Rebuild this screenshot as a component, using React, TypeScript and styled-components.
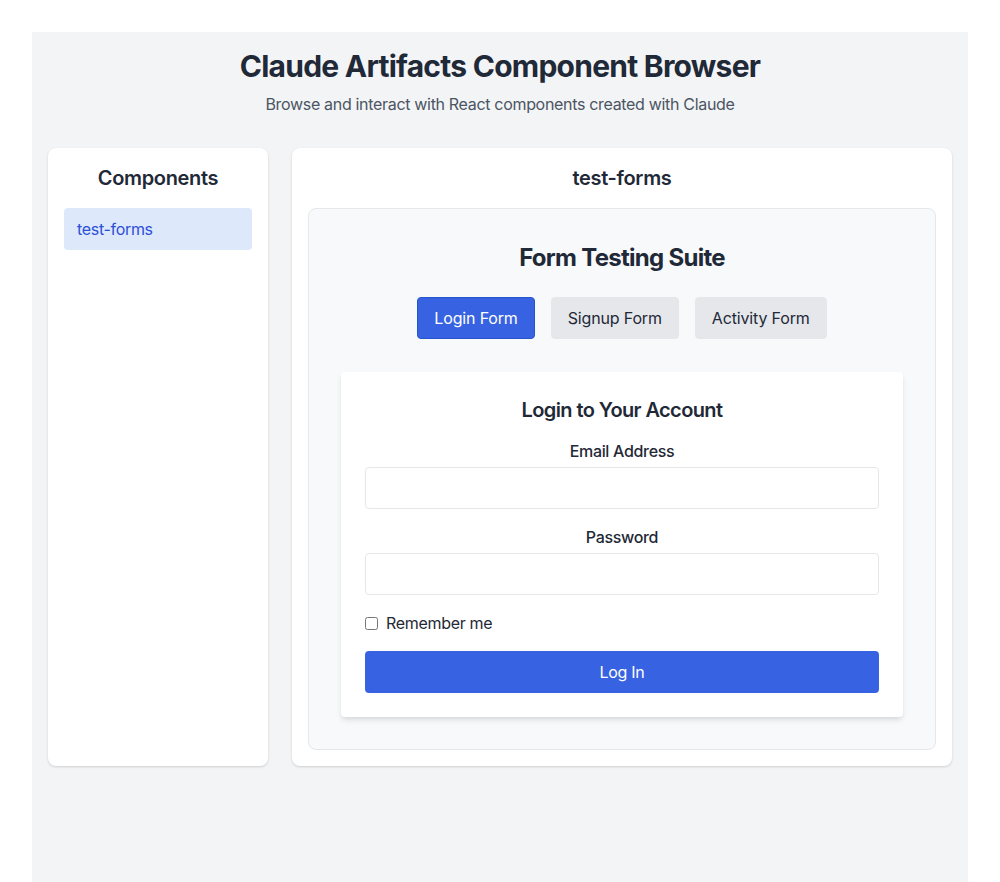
import { useState } from "react";
import styled, { createGlobalStyle } from "styled-components";

const GlobalStyle = createGlobalStyle`
  * {
    box-sizing: border-box;
  }
  body {
    margin: 0;
    font-family: Inter, "Noto Sans", sans-serif;
    letter-spacing: -0.02em;
    background: #ffffff;
    color: #1f2937;
  }
  button, input {
    letter-spacing: inherit;
  }
`;

const Page = styled.div`
  padding: 32px 32px 0 32px;
`;

const Shell = styled.div`
  background: #f3f4f6;
  min-height: 850px;
  padding: 16px 16px 32px 16px;
`;

const Header = styled.header`
  text-align: center;
  margin-bottom: 32px;
`;

const Title = styled.h1`
  margin: 0;
  font-size: 30px;
  line-height: 36px;
  font-weight: 700;
  letter-spacing: -0.025em;
  color: #1f2937;
`;

const Subtitle = styled.p`
  margin: 8px 0 0 0;
  font-size: 16px;
  line-height: 24px;
  color: #4b5563;
`;

const Layout = styled.div`
  display: grid;
  grid-template-columns: 220px 1fr;
  gap: 24px;
  align-items: stretch;
`;

const Card = styled.section`
  background: #ffffff;
  border-radius: 8px;
  box-shadow: 0 1px 3px rgba(0, 0, 0, 0.1), 0 1px 2px rgba(0, 0, 0, 0.06);
  padding: 16px;
`;

const CardTitle = styled.h2`
  margin: 0 0 16px 0;
  text-align: center;
  font-size: 20px;
  line-height: 28px;
  font-weight: 600;
  color: #1f2937;
`;

const NavItem = styled.button<{ $active?: boolean }>`
  display: block;
  width: 100%;
  text-align: left;
  border: none;
  border-radius: 4px;
  padding: 9px 13px;
  font-family: inherit;
  font-size: 16px;
  line-height: 24px;
  cursor: pointer;
  background: ${({ $active }) => ($active ? "#dde8fb" : "transparent")};
  color: ${({ $active }) => ($active ? "#2c4fd8" : "#374151")};
`;

const Stage = styled.div`
  background: #f8f9fb;
  border: 1px solid #e5e7eb;
  border-radius: 8px;
  padding: 33px 32px 32px 32px;
`;

const SuiteTitle = styled.h3`
  margin: 0 0 23px 0;
  text-align: center;
  font-size: 24px;
  line-height: 32px;
  font-weight: 700;
  letter-spacing: -0.03em;
  color: #1f2937;
`;

const Tabs = styled.div`
  display: flex;
  justify-content: center;
  gap: 16px;
  margin-bottom: 33px;
`;

const Tab = styled.button<{ $active?: boolean }>`
  padding: 8px 16px;
  border-radius: 4px;
  font-family: inherit;
  font-size: 16px;
  line-height: 24px;
  letter-spacing: -0.01em;
  cursor: pointer;
  border: 1px solid ${({ $active }) => ($active ? "#2554cc" : "#e5e7eb")};
  background: ${({ $active }) => ($active ? "#3763e2" : "#e5e7eb")};
  color: ${({ $active }) => ($active ? "#ffffff" : "#1f2937")};
`;

const FormCard = styled.form`
  background: #ffffff;
  border-radius: 4px;
  box-shadow: 0 4px 6px -1px rgba(0, 0, 0, 0.1), 0 2px 4px -1px rgba(0, 0, 0, 0.06);
  padding: 24px;
  max-width: 562px;
  margin: 0 auto;
`;

const FormTitle = styled.h4`
  margin: 0 0 15px 0;
  text-align: center;
  font-size: 20px;
  line-height: 28px;
  font-weight: 600;
  letter-spacing: -0.03em;
  color: #1f2937;
`;

const Field = styled.div`
  margin-bottom: 16px;
`;

const Label = styled.label`
  display: block;
  text-align: center;
  font-size: 16px;
  line-height: 24px;
  font-weight: 500;
  color: #1f2937;
  margin-bottom: 4px;
`;

const TextInput = styled.input`
  display: block;
  width: 100%;
  height: 42px;
  border: 1px solid #e5e7eb;
  border-radius: 4px;
  padding: 8px 12px;
  font-family: inherit;
  font-size: 16px;
  outline: none;
  background: #ffffff;
`;

const CheckRow = styled.label`
  display: flex;
  align-items: center;
  gap: 8px;
  font-size: 16px;
  line-height: 24px;
  color: #1f2937;
  margin-bottom: 16px;

  input {
    margin: 0;
    width: 13px;
    height: 13px;
  }
`;

const Submit = styled.button`
  display: block;
  width: 100%;
  height: 42px;
  border: none;
  border-radius: 4px;
  background: #3763e2;
  color: #ffffff;
  font-family: inherit;
  font-size: 16px;
  cursor: pointer;
`;

const tabs = ["Login Form", "Signup Form", "Activity Form"];

export default function App() {
  const [active, setActive] = useState(0);

  return (
    <>
      <GlobalStyle />
      <Page>
        <Shell>
          <Header>
            <Title>Claude Artifacts Component Browser</Title>
            <Subtitle>
              Browse and interact with React components created with Claude
            </Subtitle>
          </Header>
          <Layout>
            <Card>
              <CardTitle>Components</CardTitle>
              <NavItem $active>test-forms</NavItem>
            </Card>
            <Card>
              <CardTitle>test-forms</CardTitle>
              <Stage>
                <SuiteTitle>Form Testing Suite</SuiteTitle>
                <Tabs>
                  {tabs.map((t, i) => (
                    <Tab
                      key={t}
                      type="button"
                      $active={i === active}
                      onClick={() => setActive(i)}
                    >
                      {t}
                    </Tab>
                  ))}
                </Tabs>
                <FormCard onSubmit={(e) => e.preventDefault()}>
                  <FormTitle>Login to Your Account</FormTitle>
                  <Field>
                    <Label htmlFor="email">Email Address</Label>
                    <TextInput id="email" type="email" />
                  </Field>
                  <Field>
                    <Label htmlFor="password">Password</Label>
                    <TextInput id="password" type="password" />
                  </Field>
                  <CheckRow>
                    <input type="checkbox" />
                    Remember me
                  </CheckRow>
                  <Submit type="submit">Log In</Submit>
                </FormCard>
              </Stage>
            </Card>
          </Layout>
        </Shell>
      </Page>
    </>
  );
}
